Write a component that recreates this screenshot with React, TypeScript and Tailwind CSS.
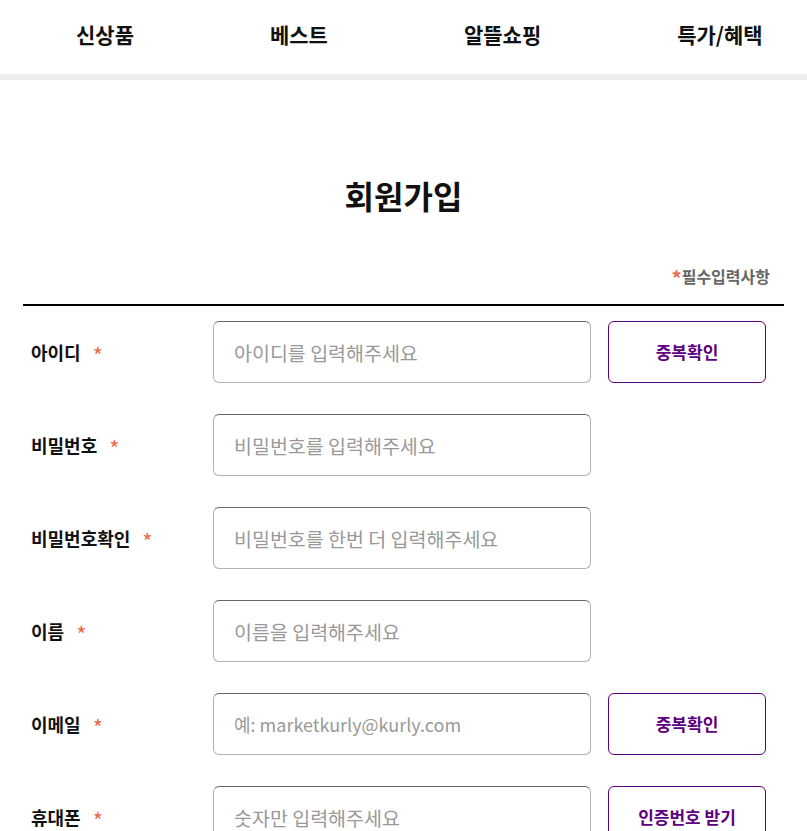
import { useState } from "react";

const font = { fontFamily: '"Noto Sans CJK KR", "Noto Sans", sans-serif' };

interface Field {
  label: string;
  placeholder: string;
  type?: string;
  button?: string;
  latin?: boolean;
}

const fields: Field[] = [
  { label: "아이디", placeholder: "아이디를 입력해주세요", button: "중복확인" },
  { label: "비밀번호", placeholder: "비밀번호를 입력해주세요", type: "password" },
  { label: "비밀번호확인", placeholder: "비밀번호를 한번 더 입력해주세요", type: "password" },
  { label: "이름", placeholder: "이름을 입력해주세요" },
  { label: "이메일", placeholder: "예: marketkurly@kurly.com", button: "중복확인", latin: true },
  { label: "휴대폰", placeholder: "숫자만 입력해주세요", button: "인증번호 받기" },
];

const menu = ["신상품", "베스트", "알뜰쇼핑", "특가/혜택"];

export default function App() {
  const [values, setValues] = useState<Record<string, string>>({});

  return (
    <div className="min-h-screen bg-white text-[#333]" style={font}>
      {/* Top menu */}
      <nav className="flex h-[80px] items-center gap-[136px] pl-[76px] pb-[4px] border-b-[6px] border-[#eeeeee] box-border">
        {menu.map((m) => (
          <a key={m} href="#" className="text-[21px] font-bold text-[#111] whitespace-nowrap">
            {m}
          </a>
        ))}
      </nav>

      <div className="px-[23px] pb-20">
        <h2 className="mt-[95px] text-center text-[32px] leading-[40px] font-bold text-[#111]">
          회원가입
        </h2>

        <div className="mt-[50px] pb-[18px] pr-[14px] border-b-2 border-black text-right text-[16px] leading-5 font-semibold text-[#666]">
          <span className="relative top-[3px] text-[20px] leading-none text-[#ee6a4a]">*</span>필수입력사항
        </div>

        {/* Form rows */}
        <div className="flex flex-col gap-[31px] pt-[15px]">
          {fields.map((f) => (
            <div key={f.label} className="flex items-center">
              <label className="w-[190px] pl-2 text-[18px] font-bold text-[#111] whitespace-nowrap">
                {f.label}
                <span className="relative top-[4px] ml-[12px] text-[22px] leading-none font-normal text-[#ee6a4a]">*</span>
              </label>
              <input
                type={f.type ?? "text"}
                placeholder={f.placeholder}
                value={values[f.label] ?? ""}
                onChange={(e) => setValues({ ...values, [f.label]: e.target.value })}
                className={`w-[378px] h-[62px] rounded-[6px] border border-[#b3b3b3] border-t-[#666] px-5 text-[#333] placeholder:text-[#999] outline-none ${
                  f.latin ? "text-[18px]" : "text-[19.5px]"
                }`}
                style={font}
              />
              {f.button && (
                <button
                  className="ml-[17px] w-[158px] h-[62px] rounded-[6px] border border-[#5f0080] text-[17px] font-bold text-[#5f0080]"
                  style={font}
                >
                  {f.button}
                </button>
              )}
            </div>
          ))}
        </div>
      </div>
    </div>
  );
}
